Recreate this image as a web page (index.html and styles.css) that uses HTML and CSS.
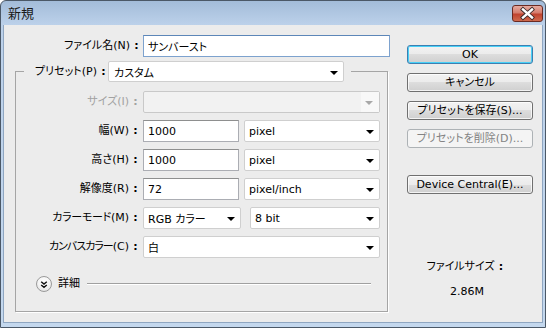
FILE: index.html
```html
<!DOCTYPE html>
<html lang="ja">
<head>
<meta charset="utf-8">
<title>新規</title>
<link rel="stylesheet" href="styles.css">
</head>
<body>
<div class="window">
  <div class="titlebar">
    <span class="title">新規</span>
    <div class="close">
      <svg width="31" height="17" viewBox="0 0 31 17">
        <path d="M11 4.5 L20 12.5 M20 4.5 L11 12.5" stroke="#3a2a2a" stroke-width="4.2" stroke-linecap="square"/>
        <path d="M11 4.5 L20 12.5 M20 4.5 L11 12.5" stroke="#ffffff" stroke-width="2.4" stroke-linecap="square"/>
      </svg>
    </div>
  </div>
  <div class="client">
    <div class="main">
      <div class="name-row">
        <span class="lbl name-lbl">ファイル名(N)<span class="c">:</span></span>
        <div class="field input focus name-input">サンバースト</div>
      </div>
      <fieldset class="preset">
        <legend class="legend">
          <span class="legend-lbl">プリセット(P)<span class="c">:</span></span>
          <div class="field select preset-select">カスタム<span class="arrow"></span></div>
        </legend>
        <div class="grid">
          <span class="lbl disabled">サイズ(I)<span class="c">:</span></span>
          <div class="field select disabled-select w-full"><span class="arrow-box"><span class="arrow gray"></span></span></div>

          <span class="lbl">幅(W)<span class="c">:</span></span>
          <div class="pair">
            <div class="field input w-num">1000</div>
            <div class="field select w-unit">pixel<span class="arrow"></span></div>
          </div>

          <span class="lbl">高さ(H)<span class="c">:</span></span>
          <div class="pair">
            <div class="field input w-num">1000</div>
            <div class="field select w-unit">pixel<span class="arrow"></span></div>
          </div>

          <span class="lbl">解像度(R)<span class="c">:</span></span>
          <div class="pair">
            <div class="field input w-num">72</div>
            <div class="field select w-unit">pixel/inch<span class="arrow"></span></div>
          </div>

          <span class="lbl"><span class="tight">カラーモード</span>(M)<span class="c">:</span></span>
          <div class="pair pair-wide">
            <div class="field select w-mode">RGB カラー<span class="arrow"></span></div>
            <div class="field select w-bit">8 bit<span class="arrow"></span></div>
          </div>

          <span class="lbl"><span class="tighter">カンバスカラー</span>(C)<span class="c">:</span></span>
          <div class="field select w-full">白<span class="arrow"></span></div>
        </div>
        <div class="detail">
          <span class="detail-btn">
            <svg width="15" height="15" viewBox="0 0 15 15">
              <path d="M4.5 4.5 L7.5 7 L10.5 4.5 M4.5 8 L7.5 10.5 L10.5 8" fill="none" stroke="#111" stroke-width="1.6"/>
            </svg>
          </span>
          <span class="detail-txt">詳細</span>
          <span class="detail-line"></span>
        </div>
      </fieldset>
    </div>
    <div class="side">
      <button class="btn default">OK</button>
      <button class="btn">キャンセル</button>
      <button class="btn">プリセットを保存(S)...</button>
      <button class="btn" disabled>プリセットを削除(D)...</button>
      <button class="btn dc">Device Central(E)...</button>
      <div class="filesize">
        <div class="fs-line">ファイルサイズ<span class="c">:</span></div>
        <div class="fs-line fs-val">2.86M</div>
      </div>
    </div>
  </div>
</div>
</body>
</html>
```

FILE: styles.css
```css
* { box-sizing: border-box; }
html, body { margin: 0; padding: 0; background: #ffffff; }
body {
  font-family: "DejaVu Sans", "Noto Sans CJK JP", sans-serif;
  font-size: 11px;
  font-feature-settings: "palt";
  color: #000;
}
.c {
  display: inline-block;
  width: 13px;
  text-align: center;
  font-weight: bold;
}
.tight { letter-spacing: -0.3px; }
.tighter { letter-spacing: -1px; }
.window {
  width: 546px;
  height: 328px;
  border: 1px solid #4b5867;
  border-radius: 6px 6px 0 0;
  background: linear-gradient(to bottom, #a3bcd9 0px, #bcd1ea 24px, #c4d8ee 100%);
  padding: 0 2px 4px 2px;
  display: flex;
  flex-direction: column;
  overflow: hidden;
}
.titlebar {
  height: 24px;
  display: flex;
  align-items: flex-start;
  justify-content: space-between;
}
.title {
  font-size: 13px;
  line-height: 16px;
  margin: 4px 0 0 5px;
  color: #1a1a1a;
  font-family: "Noto Sans CJK JP", sans-serif;
}
.close {
  width: 31px;
  height: 17px;
  margin: 4px 0 0 0;
  border: 1px solid #6a2a22;
  border-radius: 3px;
  background: linear-gradient(to bottom, #e6aba0 0%, #d57d6e 45%, #c0432f 55%, #cf6a4e 100%);
  display: flex;
  align-items: center;
  justify-content: center;
  overflow: hidden;
}
.close svg { display: block; margin: -1px; }
.client {
  flex: 1;
  background: #ececec;
  border: 1px solid #8fa6c1;
  border-top: none;
  display: flex;
  padding-top: 10px;
}
.main {
  width: 390px;
  display: flex;
  flex-direction: column;
}
.name-row {
  display: flex;
  align-items: center;
}
.lbl {
  text-align: right;
  white-space: nowrap;
  line-height: 22px;
}
.name-lbl { width: 139px; }
.field {
  height: 22px;
  background: #fff;
  display: flex;
  align-items: center;
  padding-left: 4px;
  white-space: nowrap;
  position: relative;
}
.input {
  border: 1px solid #abadb3;
  border-top-color: #8e8f8f;
}
.input.focus {
  border-color: #7da2ce;
  border-top-color: #5c86b8;
}
.name-input { width: 247px; }
.select {
  border: 1px solid #cfcfcf;
  border-radius: 2px;
}
.arrow {
  position: absolute;
  right: 5px;
  top: 9px;
  width: 0;
  height: 0;
  border-left: 4px solid transparent;
  border-right: 4px solid transparent;
  border-top: 4px solid #000;
}
.arrow.gray { border-top-color: #a8a8a8; right: 6px; }
.preset {
  margin: 4px 0 0 11px;
  width: 373px;
  padding: 0 0 19px 0;
  border: 1px solid #a5a5a5;
  box-shadow: 1px 1px 0 #ffffff;
  min-width: 0;
}
.legend {
  margin-left: 8px;
  padding: 0 7px 0 11px;
  display: flex;
  align-items: center;
}
.legend-lbl {
  width: 73px;
  line-height: 21px;
  white-space: nowrap;
}
.preset-select { width: 236px; height: 21px; padding-left: 5px; }
.grid {
  display: grid;
  grid-template-columns: 125px 237px;
  column-gap: 2px;
  row-gap: 7px;
  padding-top: 9px;
  align-items: center;
}
.grid .lbl { margin-right: -1px; }
.disabled { color: #a2a2a2; }
.disabled-select {
  background: #f2f2f2;
  border-color: #c9c9c9;
  justify-content: flex-end;
  padding: 0;
}
.arrow-box {
  width: 18px;
  height: 20px;
  background: #f8f8f8;
  position: relative;
}
.w-full { width: 237px; }
.pair { display: flex; gap: 5px; }
.pair-wide { gap: 9px; }
.w-num { width: 96px; }
.w-unit { width: 136px; }
.w-mode { width: 98px; }
.w-bit { width: 130px; }
.detail {
  display: flex;
  align-items: center;
  margin-top: 18px;
  padding-left: 20px;
  padding-right: 16px;
}
.detail-btn {
  width: 16px;
  height: 16px;
  border-radius: 50%;
  border: 1px solid #9a9a9a;
  background: radial-gradient(circle at 50% 35%, #ffffff 0%, #f4f4f4 50%, #d9d9d9 100%);
  display: flex;
  align-items: center;
  justify-content: center;
}
.detail-btn svg { display: block; }
.detail-txt { margin-left: 6px; line-height: 16px; }
.detail-line {
  flex: 1;
  height: 2px;
  margin-left: 7px;
  border-top: 1px solid #a0a0a0;
  border-bottom: 1px solid #ffffff;
}
.side {
  margin-left: 13px;
  width: 126px;
  padding-top: 10px;
  display: flex;
  flex-direction: column;
  gap: 9px;
}
.btn {
  font: inherit;
  font-feature-settings: "palt";
  height: 19px;
  width: 126px;
  padding: 0;
  margin: 0;
  border: 1px solid #707070;
  border-radius: 3px;
  background: linear-gradient(to bottom, #f2f2f2 0%, #ebebeb 50%, #dddddd 50%, #cfcfcf 100%);
  color: #000;
  line-height: 17px;
  box-shadow: inset 0 0 0 1px rgba(255,255,255,0.75);
}
.btn.default {
  border-color: #3c7fb1;
  background: linear-gradient(to bottom, #f2f2f2 0%, #ebebeb 50%, #dddddd 50%, #cfcfcf 100%);
  box-shadow: inset 0 0 0 1px #48d0f7;
}
.btn:disabled {
  border-color: #adb2b5;
  background: #f4f4f4;
  color: #838383;
  box-shadow: none;
}
.btn.dc { margin-top: 18px; }
.filesize {
  margin-top: 56px;
  display: flex;
  flex-direction: column;
  align-items: center;
  gap: 9px;
  padding-right: 6px;
}
.fs-line { line-height: 16px; white-space: nowrap; }
```
